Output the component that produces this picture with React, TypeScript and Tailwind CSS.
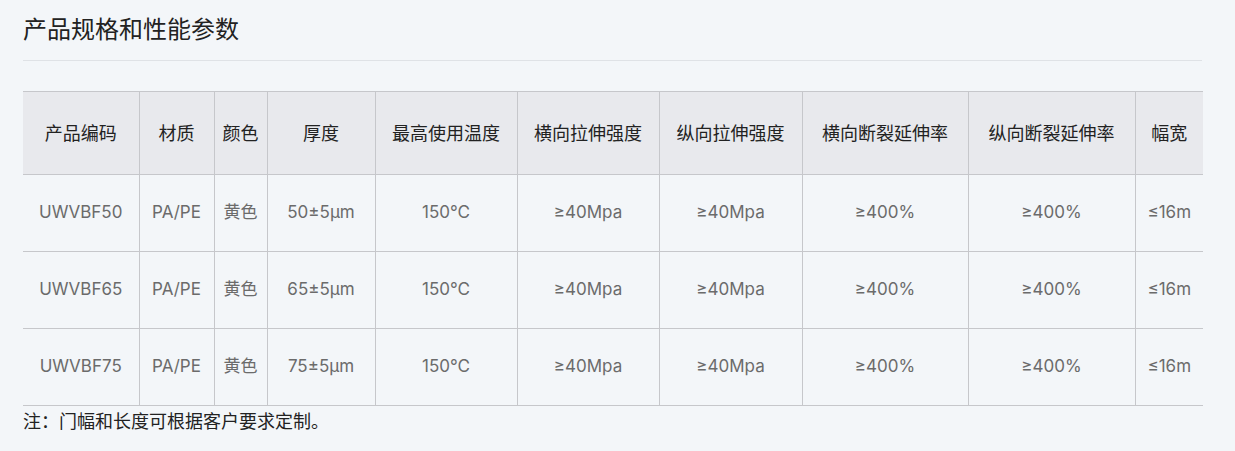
const headers = [
  '产品编码',
  '材质',
  '颜色',
  '厚度',
  '最高使用温度',
  '横向拉伸强度',
  '纵向拉伸强度',
  '横向断裂延伸率',
  '纵向断裂延伸率',
  '幅宽',
];

const widths = [116, 75, 53, 108, 142, 142, 143, 166, 167, 68];

const rows = [
  ['UWVBF50', 'PA/PE', '黄色', '50±5μm', '150℃', '≥40Mpa', '≥40Mpa', '≥400%', '≥400%', '≤16m'],
  ['UWVBF65', 'PA/PE', '黄色', '65±5μm', '150℃', '≥40Mpa', '≥40Mpa', '≥400%', '≥400%', '≤16m'],
  ['UWVBF75', 'PA/PE', '黄色', '75±5μm', '150℃', '≥40Mpa', '≥40Mpa', '≥400%', '≥400%', '≤16m'],
];

export default function App() {
  return (
    <div
      className="w-[1235px] h-[451px] bg-[#f3f6f9] px-[23px] pt-[14px]"
      style={{ fontFamily: 'Inter, "Noto Sans CJK SC", sans-serif' }}
    >
      <h2 className="text-[24px] leading-[32px] text-[#222] pb-[14px] border-b border-[#dfe2e6] w-[1179px]">
        产品规格和性能参数
      </h2>
      <table className="mt-[30px] table-fixed border-collapse w-[1180px]">
        <colgroup>
          {widths.map((w, i) => (
            <col key={i} style={{ width: w }} />
          ))}
        </colgroup>
        <thead>
          <tr className="bg-[#e8e9ed] h-[83px]">
            {headers.map((h, i) => (
              <th
                key={h}
                className={
                  'font-normal text-[18px] text-[#222] border-t border-b border-[#c6c7cb] text-center p-0 ' +
                  (i > 0 ? 'border-l' : '')
                }
              >
                {h}
              </th>
            ))}
          </tr>
        </thead>
        <tbody>
          {rows.map((r, ri) => (
            <tr key={ri} className="h-[77px]">
              {r.map((c, ci) => (
                <td
                  key={ci}
                  className={
                    'text-[17px] text-[#6b6b6b] border-b border-[#c6c7cb] text-center p-0 ' +
                    (ci > 0 ? 'border-l' : '')
                  }
                >
                  {c}
                </td>
              ))}
            </tr>
          ))}
        </tbody>
      </table>
      <p className="text-[18px] text-[#222] mt-[3px] leading-[26px]">注：门幅和长度可根据客户要求定制。</p>
    </div>
  );
}
